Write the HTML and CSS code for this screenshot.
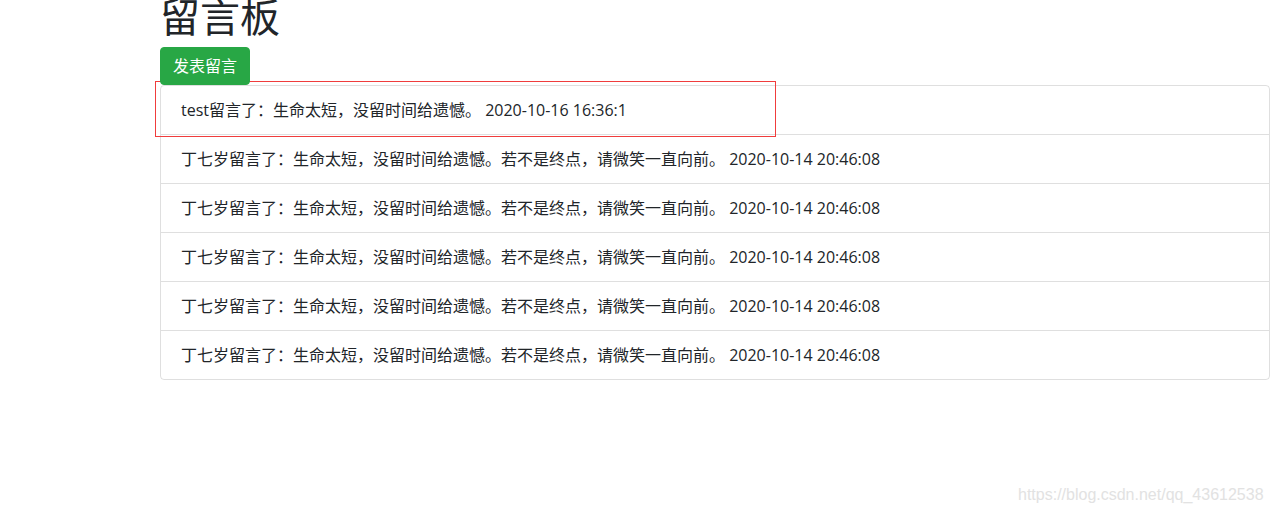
FILE: index.html
```html
<!DOCTYPE html>
<html>
<head>
    <title>留言板</title>
    <link rel="stylesheet" href="styles.css">
</head>
<body>
    <div class="container">
        <h1 class="titulo">留言板</h1>
        <button class="btn-verde" type="button">发表留言</button>
        <div class="caja-lista">
            <ul class="lista">
                <li class="item">test留言了：生命太短，没留时间给遗憾。 2020-10-16 16:36:1</li>
                <li class="item">丁七岁留言了：生命太短，没留时间给遗憾。若不是终点，请微笑一直向前。 2020-10-14 20:46:08</li>
                <li class="item">丁七岁留言了：生命太短，没留时间给遗憾。若不是终点，请微笑一直向前。 2020-10-14 20:46:08</li>
                <li class="item">丁七岁留言了：生命太短，没留时间给遗憾。若不是终点，请微笑一直向前。 2020-10-14 20:46:08</li>
                <li class="item">丁七岁留言了：生命太短，没留时间给遗憾。若不是终点，请微笑一直向前。 2020-10-14 20:46:08</li>
                <li class="item">丁七岁留言了：生命太短，没留时间给遗憾。若不是终点，请微笑一直向前。 2020-10-14 20:46:08</li>
            </ul>
            <div class="marca"></div>
        </div>
    </div>
    <div class="marca-agua">https://blog.csdn.net/qq_43612538</div>
</body>
</html>
```

FILE: styles.css
```css
body {
    margin: 0;
    font-family: "Open Sans", "Noto Sans CJK SC", sans-serif;
    color: #212529;
    background: #fff;
    overflow: hidden;
}
.container {
    width: 1110px;
    margin-left: 160px;
}
.titulo {
    font-family: "Noto Sans CJK SC", sans-serif;
    font-size: 40px;
    font-weight: 400;
    line-height: 48px;
    margin: -9px 0 8px 0;
}
.btn-verde {
    position: relative;
    z-index: 2;
    display: block;
    font-family: "Open Sans", "Noto Sans CJK SC", sans-serif;
    font-size: 16px;
    line-height: 24px;
    padding: 6px 12px;
    color: #fff;
    background-color: #28a745;
    border: 1px solid #28a745;
    border-radius: 4px;
}
.caja-lista {
    position: relative;
}
.lista {
    list-style: none;
    margin: 0;
    padding: 0;
    border: 1px solid rgba(0, 0, 0, .125);
    border-radius: 4px;
}
.item {
    font-size: 16px;
    line-height: 24px;
    padding: 12px 20px;
    border-top: 1px solid rgba(0, 0, 0, .125);
    white-space: nowrap;
}
.item:first-child {
    border-top: none;
}
.marca {
    position: absolute;
    left: -5px;
    top: -4px;
    width: 619px;
    height: 54px;
    border: 1px solid #f03c3c;
}
.marca-agua {
    position: absolute;
    left: 1018px;
    top: 486px;
    font-family: "Liberation Sans", Arial, sans-serif;
    font-size: 16px;
    color: #e2e2e2;
}
```
